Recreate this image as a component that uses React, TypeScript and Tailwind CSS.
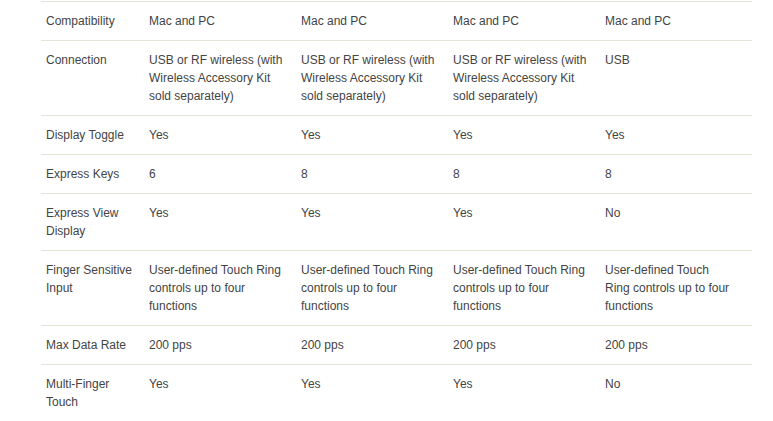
const rows: { label: string; values: string[] }[] = [
    { label: 'Compatibility', values: ['Mac and PC', 'Mac and PC', 'Mac and PC', 'Mac and PC'] },
    {
        label: 'Connection',
        values: [
            'USB or RF wireless (with Wireless Accessory Kit sold separately)',
            'USB or RF wireless (with Wireless Accessory Kit sold separately)',
            'USB or RF wireless (with Wireless Accessory Kit sold separately)',
            'USB',
        ],
    },
    { label: 'Display Toggle', values: ['Yes', 'Yes', 'Yes', 'Yes'] },
    { label: 'Express Keys', values: ['6', '8', '8', '8'] },
    { label: 'Express View Display', values: ['Yes', 'Yes', 'Yes', 'No'] },
    {
        label: 'Finger Sensitive Input',
        values: [
            'User-defined Touch Ring controls up to four functions',
            'User-defined Touch Ring controls up to four functions',
            'User-defined Touch Ring controls up to four functions',
            'User-defined Touch Ring controls up to four functions',
        ],
    },
    { label: 'Max Data Rate', values: ['200 pps', '200 pps', '200 pps', '200 pps'] },
    { label: 'Multi-Finger Touch', values: ['Yes', 'Yes', 'Yes', 'No'] },
];

export default function App() {
    return (
        <div className="min-h-screen bg-white pt-px pl-[41px] font-['Liberation_Sans',Arial,sans-serif] text-[12px] leading-[18px] text-[#444]">
            <div className="w-[711px] border-t border-[#e6e4d4]">
                {rows.map((row) => (
                    <div
                        key={row.label}
                        className="grid grid-cols-[103px_152px_152px_152px_152px] border-b border-[#e6e4d4]"
                    >
                        <div className="px-[5px] py-[10px]">{row.label}</div>
                        {row.values.map((v, i) => (
                            <div
                                key={i}
                                className={
                                    i === 3
                                        ? 'py-[10px] pr-[20px] pl-[5px]'
                                        : 'py-[10px] pr-[6px] pl-[5px]'
                                }
                            >
                                {v}
                            </div>
                        ))}
                    </div>
                ))}
            </div>
        </div>
    );
}
